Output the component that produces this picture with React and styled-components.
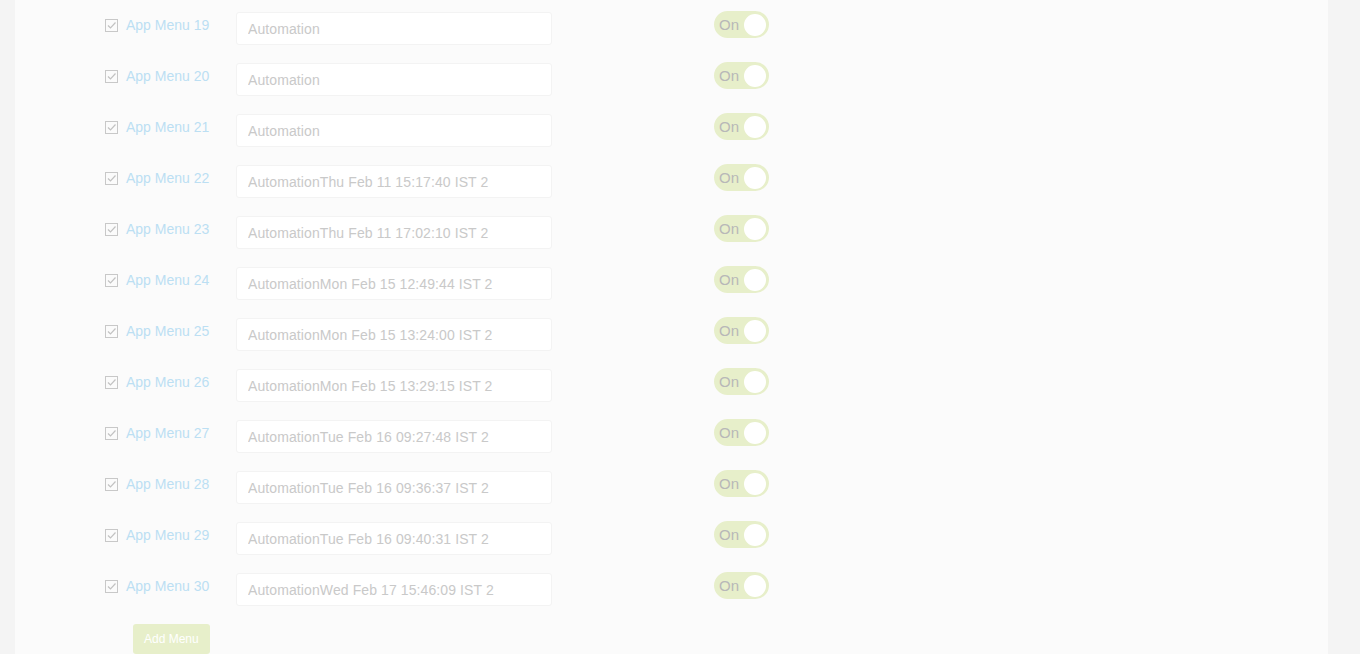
import React from "react";
import styled, { createGlobalStyle } from "styled-components";

const Global = createGlobalStyle`
  html, body { margin: 0; padding: 0; background: #f4f4f4; overflow: hidden; }
  body { font-family: "Liberation Sans", Arial, sans-serif; }
`;

const Page = styled.div`
  height: 654px;
  display: flex;
`;

const Panel = styled.div`
  margin-left: 15px;
  width: 1313px;
  background: #fbfbfb;
  display: flex;
  flex-direction: column;
`;

const Row = styled.div`
  display: flex;
  align-items: flex-start;
  height: 51px;
  padding-left: 90px;
  flex-shrink: 0;
`;

const CheckLabel = styled.label`
  width: 131px;
  display: flex;
  align-items: flex-start;
  gap: 8px;
`;

const Box = styled.span`
  margin-top: 19px;
  width: 13px;
  height: 13px;
  box-sizing: border-box;
  border: 1px solid #c8c8c8;
  display: flex;
  background: #fbfbfb;
`;

const LabelText = styled.span`
  margin-top: 15px;
  font-size: 14px;
  line-height: 20px;
  color: #bcdff3;
  white-space: nowrap;
`;

const TextInput = styled.input`
  margin-top: 12px;
  width: 316px;
  height: 33px;
  box-sizing: border-box;
  border: 1px solid #f3f3f3;
  border-radius: 3px;
  background: #ffffff;
  padding: 0 11px;
  font-family: "Liberation Sans", Arial, sans-serif;
  font-size: 14px;
  letter-spacing: 0.1px;
  color: #c9c9c9;
  outline: none;
`;

const Toggle = styled.div`
  margin-top: 11px;
  margin-left: 162px;
  width: 55px;
  height: 27px;
  box-sizing: border-box;
  border-radius: 14px;
  background: #e7efca;
  display: flex;
  align-items: center;
  justify-content: space-between;
  padding: 0 3px 0 5px;
`;

const ToggleText = styled.span`
  font-size: 15px;
  color: #b8b8b8;
  line-height: 1;
`;

const Knob = styled.span`
  width: 22px;
  height: 22px;
  border-radius: 50%;
  background: #ffffff;
`;

const AddButton = styled.button`
  margin-top: 12px;
  margin-left: 118px;
  align-self: flex-start;
  height: 30px;
  padding: 0 11px;
  border: none;
  border-radius: 3px;
  background: #e7efca;
  color: #ffffff;
  font-family: "Liberation Sans", Arial, sans-serif;
  font-size: 12px;
`;

const rows = [
  [19, "Automation"],
  [20, "Automation"],
  [21, "Automation"],
  [22, "AutomationThu Feb 11 15:17:40 IST 2"],
  [23, "AutomationThu Feb 11 17:02:10 IST 2"],
  [24, "AutomationMon Feb 15 12:49:44 IST 2"],
  [25, "AutomationMon Feb 15 13:24:00 IST 2"],
  [26, "AutomationMon Feb 15 13:29:15 IST 2"],
  [27, "AutomationTue Feb 16 09:27:48 IST 2"],
  [28, "AutomationTue Feb 16 09:36:37 IST 2"],
  [29, "AutomationTue Feb 16 09:40:31 IST 2"],
  [30, "AutomationWed Feb 17 15:46:09 IST 2"],
];

const Check = () => (
  <svg width="11" height="11" viewBox="0 0 11 11">
    <path d="M2 5.5 L4.5 8 L9.5 2.5" fill="none" stroke="#c2c2c2" strokeWidth="1.2" />
  </svg>
);

export default function App() {
  return (
    <>
      <Global />
      <Page>
        <Panel>
          {rows.map(([n, v]) => (
            <Row key={n}>
              <CheckLabel>
                <Box>
                  <Check />
                </Box>
                <LabelText>App Menu {n}</LabelText>
              </CheckLabel>
              <TextInput defaultValue={v} />
              <Toggle>
                <ToggleText>On</ToggleText>
                <Knob />
              </Toggle>
            </Row>
          ))}
          <AddButton>Add Menu</AddButton>
        </Panel>
      </Page>
    </>
  );
}
